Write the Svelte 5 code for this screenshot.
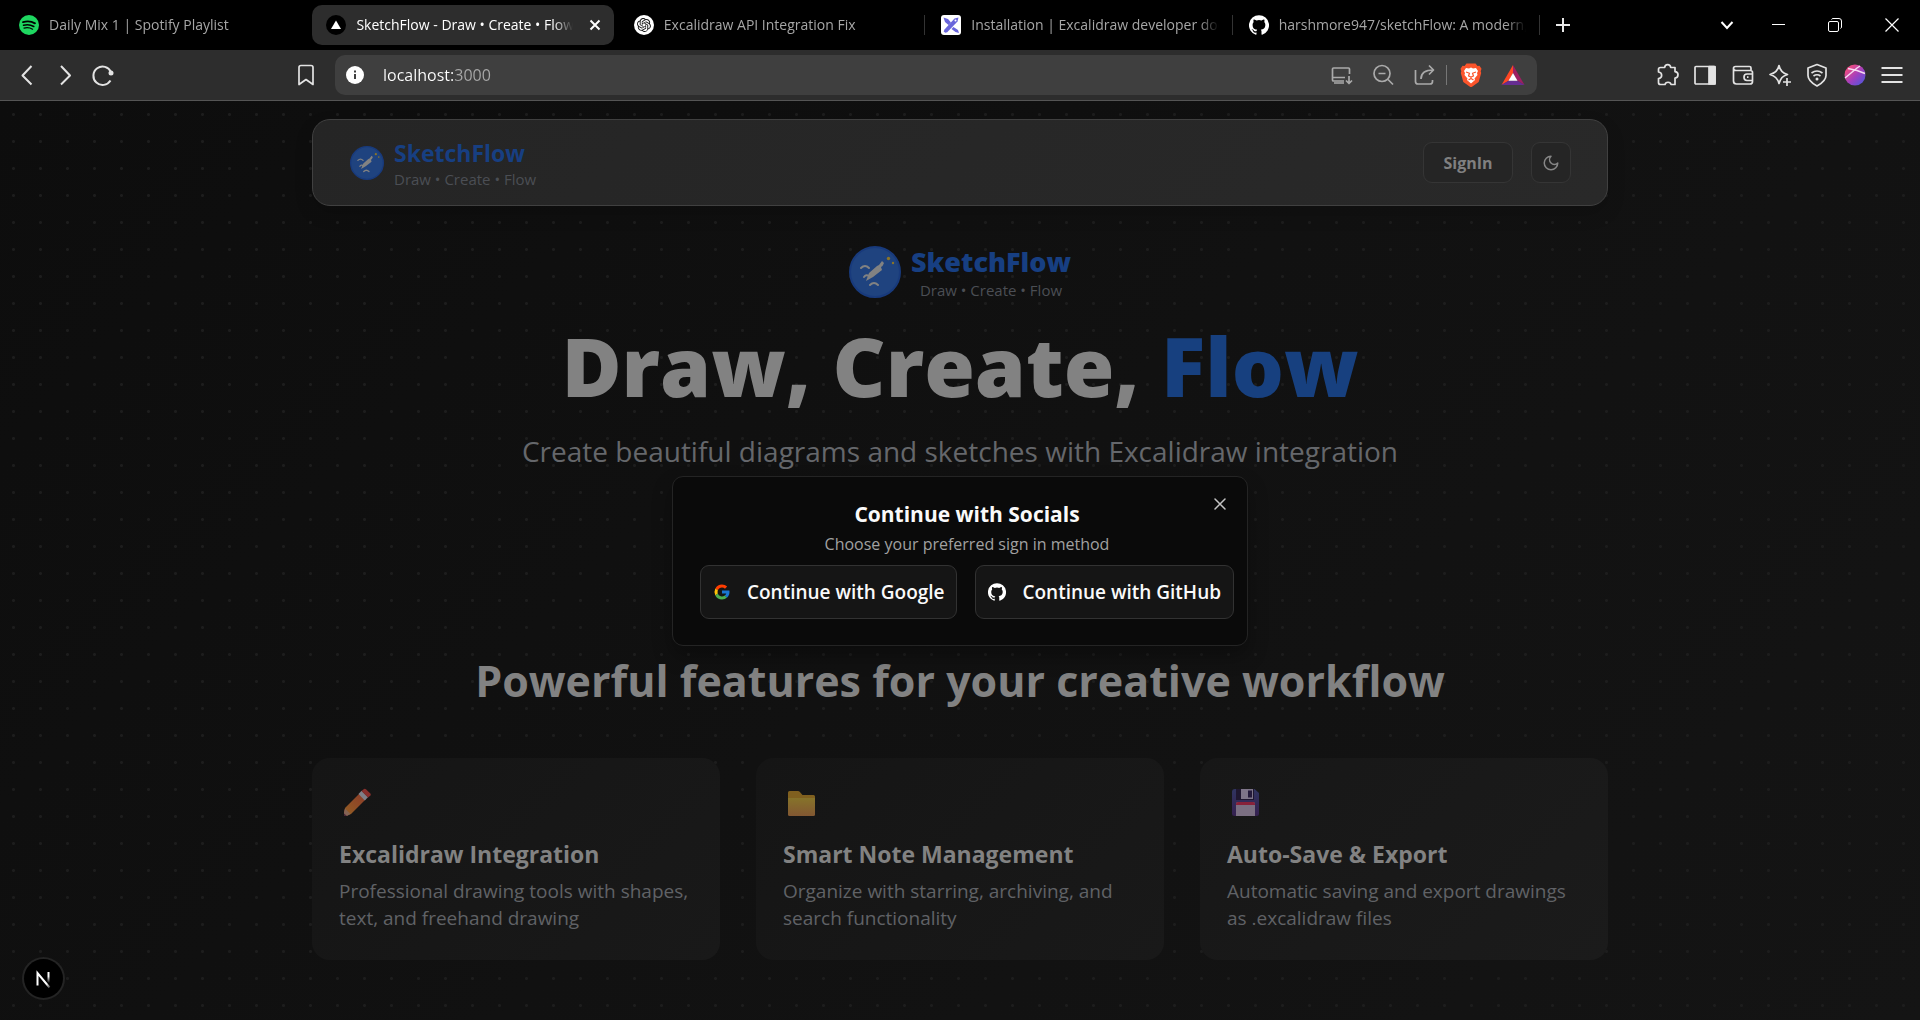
<script>
  let address = $state('localhost:3000');

  const githubPath =
    'M12 .3a12 12 0 0 0-3.8 23.4c.6.1.8-.3.8-.6v-2c-3.3.7-4-1.6-4-1.6-.6-1.4-1.4-1.8-1.4-1.8-1-.7.1-.7.1-.7 1.2 0 1.9 1.2 1.9 1.2 1 1.8 2.8 1.3 3.5 1 0-.8.4-1.3.7-1.6-2.7-.3-5.5-1.3-5.5-6 0-1.2.5-2.3 1.3-3.1-.2-.4-.6-1.6 0-3.2 0 0 1-.3 3.4 1.2a11.5 11.5 0 0 1 6 0c2.3-1.5 3.3-1.2 3.3-1.2.6 1.6.2 2.8 0 3.2.9.8 1.3 1.9 1.3 3.2 0 4.6-2.8 5.6-5.5 5.9.5.4.9 1 .9 2.2v3.3c0 .3.1.7.8.6A12 12 0 0 0 12 .3';
  const knotPath =
    'M22.2819 9.8211a5.9847 5.9847 0 0 0-.5157-4.9108 6.0462 6.0462 0 0 0-6.5098-2.9A6.0651 6.0651 0 0 0 4.9807 4.1818a5.9847 5.9847 0 0 0-3.9977 2.9 6.0462 6.0462 0 0 0 .7427 7.0966 5.98 5.98 0 0 0 .511 4.9107 6.051 6.051 0 0 0 6.5146 2.9001A5.9847 5.9847 0 0 0 13.2599 24a6.0557 6.0557 0 0 0 5.7718-4.2058 5.9894 5.9894 0 0 0 3.9977-2.9001 6.0557 6.0557 0 0 0-.7475-7.0729zm-9.022 12.6081a4.4755 4.4755 0 0 1-2.8764-1.0408l.1419-.0804 4.7783-2.7582a.7948.7948 0 0 0 .3927-.6813v-6.7369l2.02 1.1686a.071.071 0 0 1 .038.052v5.5826a4.504 4.504 0 0 1-4.4945 4.4944zm-9.6607-4.1254a4.4708 4.4708 0 0 1-.5346-3.0137l.142.0852 4.783 2.7582a.7712.7712 0 0 0 .7806 0l5.8428-3.3685v2.3324a.0804.0804 0 0 1-.0332.0615L9.74 19.9502a4.4992 4.4992 0 0 1-6.1408-1.6464zM2.3408 7.8956a4.485 4.485 0 0 1 2.3655-1.9728V11.6a.7664.7664 0 0 0 .3879.6765l5.8144 3.3543-2.0201 1.1685a.0757.0757 0 0 1-.071 0l-4.8303-2.7865A4.504 4.504 0 0 1 2.3408 7.872zm16.5963 3.8558L13.1038 8.364 15.1192 7.2a.0757.0757 0 0 1 .071 0l4.8303 2.7913a4.4944 4.4944 0 0 1-.6765 8.1042v-5.6772a.79.79 0 0 0-.407-.667zm2.0107-3.0231l-.142-.0852-4.7735-2.7818a.7759.7759 0 0 0-.7854 0L9.409 9.2297V6.8974a.0662.0662 0 0 1 .0284-.0615l4.8303-2.7866a4.4992 4.4992 0 0 1 6.6802 4.66zM8.3065 12.863l-2.02-1.1638a.0804.0804 0 0 1-.038-.0567V6.0742a4.4992 4.4992 0 0 1 7.3757-3.4537l-.142.0805L8.704 5.459a.7948.7948 0 0 0-.3927.6813zm1.0976-2.3654l2.602-1.4998 2.6069 1.4998v2.9994l-2.5974 1.4997-2.6067-1.4997Z';

  const tabs = [
    { icon: 'spotify', title: 'Daily Mix 1 | Spotify Playlist' },
    { icon: 'triangle', title: 'SketchFlow - Draw • Create • Flow', active: true },
    { icon: 'knot', title: 'Excalidraw API Integration Fix', divider: true },
    { icon: 'excalidraw', title: 'Installation | Excalidraw developer docs', divider: true },
    { icon: 'github', title: 'harshmore947/sketchFlow: A modern, collaborative', divider: true }
  ];

  const features = [
    {
      icon: 'pencil',
      title: 'Excalidraw Integration',
      text: 'Professional drawing tools with shapes, text, and freehand drawing'
    },
    {
      icon: 'folder',
      title: 'Smart Note Management',
      text: 'Organize with starring, archiving, and search functionality'
    },
    {
      icon: 'floppy',
      title: 'Auto-Save & Export',
      text: 'Automatic saving and export drawings as .excalidraw files'
    }
  ];
</script>

{#snippet favicon(name)}
  {#if name === 'spotify'}
    <svg class="fav" viewBox="0 0 20 20" aria-hidden="true">
      <circle cx="10" cy="10" r="10" fill="#1ed760" />
      <g fill="none" stroke="#000" stroke-linecap="round">
        <path d="M4 7.2c4-1.2 8.600-.8 12 1.200" stroke-width="1.800" />
        <path d="M4.500 10.300c3.500-1 7.200-.6 10.300 1.200" stroke-width="1.500" />
        <path d="M5 13.100c3-.8 5.900-.5 8.600 1.100" stroke-width="1.200" />
      </g>
    </svg>
  {:else if name === 'triangle'}
    <svg class="fav" viewBox="0 0 20 20" aria-hidden="true">
      <circle cx="10" cy="10" r="10" fill="#000" />
      <path d="M10 5.500 15 14H5z" fill="#fff" />
    </svg>
  {:else if name === 'knot'}
    <svg class="fav" viewBox="0 0 20 20" aria-hidden="true">
      <circle cx="10" cy="10" r="10" fill="#fff" />
      <path d={knotPath} fill="#111" transform="translate(3 3) scale(.58)" />
    </svg>
  {:else if name === 'excalidraw'}
    <svg class="fav" viewBox="0 0 20 20" aria-hidden="true">
      <rect width="20" height="20" rx="3" fill="#fff" />
      <path d="M2.500 2.500 7 4l3 3.500L7.500 10 4 7zM12.500 12l4.500 3 1 3-3.500-1-4-3z" fill="#6965db" />
      <path d="m17.500 2.500-4 1L3.500 14.500l-.8 2 1.500 1.200 2-.5L16.500 6.500z" fill="#6965db" />
      <circle cx="14.500" cy="5.500" r="1" fill="#fff" />
    </svg>
  {:else}
    <svg class="fav" viewBox="0 0 24 24" aria-hidden="true"><path d={githubPath} fill="#fff" /></svg>
  {/if}
{/snippet}

{#snippet brandMark()}
  <svg class="mark" viewBox="0 0 52 52" aria-hidden="true">
    <circle cx="26" cy="26" r="25" fill="#1f437f" stroke="#183a7c" stroke-width="2" />
    <g fill="none" stroke="#828282" stroke-width="2" stroke-linecap="round">
      <path d="M12 22q4-4 8 0M15 31q2-3 5-1M21 39q4-4 8 0" />
    </g>
    <path d="m33 15 2 2-1.500 3-1.500 1 1 3-9 7-7 4 3-8 8-7 2-1z" fill="#828282" />
    <circle cx="39.500" cy="12.500" r="1.700" fill="#8b7528" />
    <circle cx="44" cy="17" r="1.200" fill="#8b7528" />
  </svg>
{/snippet}

<div class="window">
  <header class="tabstrip">
    <nav class="tabs" aria-label="Tabs">
      {#each tabs as tab}
        <div class="tab" class:active={tab.active} class:divider={tab.divider}>
          {@render favicon(tab.icon)}
          <a class="tab-title" href="#top">{tab.title}</a>
          {#if tab.active}
            <button class="tab-close" aria-label="Close tab">
              <svg width="12" height="12" viewBox="0 0 12 12"><path d="M1.500 1.500 10.500 10.500M10.500 1.500 1.500 10.500" stroke="#fff" stroke-width="2" /></svg>
            </button>
          {/if}
        </div>
      {/each}
    </nav>
    <button class="plain new-tab" aria-label="New tab">
      <svg width="14" height="14" viewBox="0 0 14 14"><path d="M7 0v14M0 7h14" stroke="#e8e8e8" stroke-width="2" /></svg>
    </button>
    <div class="window-controls">
      <button class="plain tab-search" aria-label="Search tabs">
        <svg width="14" height="10" viewBox="0 0 14 10"><path d="m1.500 2 5.500 6 5.500-6" fill="none" stroke="#fff" stroke-width="2" /></svg>
      </button>
      <button class="plain" aria-label="Minimize">
        <svg width="13" height="13" viewBox="0 0 13 13"><path d="M0 5.500h13" stroke="#fff" /></svg>
      </button>
      <button class="plain" aria-label="Restore">
        <svg width="14" height="14" viewBox="0 0 14 14"><g fill="none" stroke="#fff"><rect x=".5" y="3.500" width="10" height="10" rx="1.500" /><path d="M3.500 1.500q.5-1 1.500-1h6q2.500 0 2.500 2.500v6q0 1-1 1.500" /></g></svg>
      </button>
      <button class="plain" aria-label="Close window">
        <svg width="14" height="14" viewBox="0 0 14 14"><path d="m.5.5 13 13M13.500.5.5 13.500" stroke="#fff" stroke-width="1.200" /></svg>
      </button>
    </div>
  </header>

  <div class="toolbar">
    <div class="nav-group">
      <button class="tool" aria-label="Back">
        <svg viewBox="0 0 24 24"><path d="m16.500 3-9 9.500 9 9" stroke-width="2" /></svg>
      </button>
      <button class="tool" aria-label="Forward">
        <svg viewBox="0 0 24 24"><path d="m8 3 9 9.500-9 9" stroke-width="2" /></svg>
      </button>
      <button class="tool" aria-label="Reload">
        <svg viewBox="0 0 24 24"><path d="M19.500 17.500A9.200 9.200 0 1 1 20 9" stroke-width="2" /><circle cx="20" cy="10" r="2.500" fill="#e3e3e3" stroke="none" /></svg>
      </button>
      <button class="tool bookmark" aria-label="Bookmark this page">
        <svg viewBox="0 0 24 24"><path d="M5 21.500V4.500q0-2 2-2h10q2 0 2 2v17l-7-5z" /></svg>
      </button>
    </div>

    <div class="address">
      <svg class="info" viewBox="0 0 18 18" aria-hidden="true"><circle cx="9" cy="9" r="9" fill="#fff" /><path d="M9 8v5M9 4.500v2" stroke="#3f3f3f" stroke-width="2" /></svg>
      <input type="text" aria-label="Address" bind:value={address} />
      <div class="page-actions">
        <button class="tool dim" aria-label="Install app">
          <svg viewBox="0 0 24 24"><path d="M20.500 11V6q0-1-1-1h-15q-1 0-1 1v11q0 1 1 1H15M3 14.500h13M5 20h10M20 13v7M17 17.500l3 3 3-3" /></svg>
        </button>
        <button class="tool dim" aria-label="Zoom out">
          <svg viewBox="0 0 24 24"><circle cx="11" cy="10.500" r="8" /><path d="M7.500 10.500h7M17 16.500l5 5" /></svg>
        </button>
        <button class="tool dim" aria-label="Share">
          <svg viewBox="0 0 24 24"><path d="M2.500 7v11.500q0 2.500 2.500 2.500h12q2.500 0 2.500-2.500V17M8 16c0-6 4-9 12.500-9M16 2.500 20.500 7 16 11.500" /></svg>
        </button>
      </div>
      <span class="rule"></span>
      <div class="page-actions">
        <button class="tool" aria-label="Shields">
          <svg viewBox="0 0 24 24"><path d="m7.500.5h9l2 2.500 2-.2 2 3-.8 2.500.5 1.700-2.500 9-7.700 5.500L4.300 19 1.800 10l.5-1.700-.8-2.500 2-3 2 .2z" fill="#fb542b" stroke="none" /><path d="m7 5 3 .5L12 4.500l2 1L17 5l2 3-1 2 .5 2-3 3.500.5 1.500-4 3.500L8 17l.5-1.500-3-3.500.5-2-1-2z" fill="#fff" stroke="none" /><path d="m7 9 3.500 1.200L9.500 13l2.500 1 2.500-1-1-2.800L17 9M12 14v1.500M9.500 17l2.500-1.500 2.500 1.500" stroke="#fb542b" stroke-width="1.200" /></svg>
        </button>
        <button class="tool" aria-label="Rewards">
          <svg viewBox="0 0 24 24"><path d="M12 2 .5 22 8 17.500l4-7.500z" fill="#ff4724" stroke="none" /><path d="M12 2 23.500 22 16 17.500 12 10z" fill="#9e1f63" stroke="none" /><path d="M.5 22h23L16 17.500H8z" fill="#662d91" stroke="none" /><path d="m12 10 4.500 7.800h-9z" fill="#fff" stroke="none" /></svg>
        </button>
      </div>
    </div>

    <div class="extensions">
      <button class="tool" aria-label="Extensions">
        <svg viewBox="0 0 24 24"><path d="M4.500 4.500h4.200c.3-3.800 5.600-3.800 6 0H19v4.200c4 .3 4 6 0 6.400v6.400h-4c-.4-3-5.500-3-6 0H4.500q-2 0-2-2v-4c4.200-.4 4.200-6 0-6.500V6.500q0-2 2-2z" /></svg>
      </button>
      <button class="tool" aria-label="Side panel">
        <svg viewBox="0 0 24 24"><rect x="2" y="3.500" width="20" height="17.500" rx="1" /><path d="M16 3.500h6V21h-6z" fill="#e3e3e3" /></svg>
      </button>
      <button class="tool" aria-label="Wallet">
        <svg viewBox="0 0 24 24"><path d="M20 7.500V5q0-1.500-1.500-1.500H4.500q-2 0-2 2V18q0 3 3 3H19q2.500 0 2.500-2.500v-9q0-2-2-2H5q-2.500 0-2.500-2M21.500 11H16q-3 0-3 3.200t3 3.300h5.500M16 14.200h1.500" /></svg>
      </button>
      <button class="tool" aria-label="Assistant">
        <svg viewBox="0 0 24 24"><path d="M11 2.500c1 5 3 7.500 8.500 9-2.500.8-4 1.500-5.500 3-1.500 1.800-2.200 3.500-3 6-1.200-5-3.500-7.500-9-9 5.500-1.500 8-4 9-9zM19 15v8M15 19h8" /></svg>
      </button>
      <button class="tool" aria-label="VPN">
        <svg viewBox="0 0 24 24"><path d="m12 1.500 9 3.500v7.500c0 4.500-3.500 7.500-9 10.500-5.500-3-9-6-9-10.500V5zM6.500 10q5.500-4 11 0M8.500 13q3.500-2.500 7 0" /><circle cx="12" cy="16" r="1.500" fill="#e3e3e3" stroke="none" /></svg>
      </button>
      <button class="tool" aria-label="Profile">
        <svg viewBox="0 0 24 24">
          <defs><linearGradient id="avatar" x1="0" y1="0" x2="1" y2="1"><stop offset=".2" stop-color="#e84b86" /><stop offset=".55" stop-color="#a13fc0" /><stop offset="1" stop-color="#3f5be0" /></linearGradient></defs>
          <circle cx="12" cy="12" r="10.500" fill="url(#avatar)" stroke="none" /><path d="M2 15 14 5l3-2M5 5.500l9 2 8 3" stroke="#f6d9f3" stroke-width="1.500" />
        </svg>
      </button>
      <button class="tool" aria-label="Menu">
        <svg viewBox="0 0 24 24"><path d="M1.500 5h21M1.500 12h21M1.500 19h21" stroke-width="2" /></svg>
      </button>
    </div>
  </div>

  <div class="page" id="top">
    <div class="container">
      <header class="site-header">
        <div class="brand small">
          {@render brandMark()}
          <div>
            <div class="brand-name">SketchFlow</div>
            <div class="tagline">Draw • Create • Flow</div>
          </div>
        </div>
        <div class="header-actions">
          <button class="sign-in">SignIn</button>
          <button class="theme" aria-label="Toggle theme">
            <svg width="18" height="18" viewBox="0 0 24 24" fill="none" stroke="#868686" stroke-width="2" stroke-linecap="round" stroke-linejoin="round"><path d="M12 3a6 6 0 0 0 9 9 9 9 0 1 1-9-9Z" /></svg>
          </button>
        </div>
      </header>

      <main>
        <section class="hero">
          <div class="brand large">
            {@render brandMark()}
            <div>
              <div class="brand-name">SketchFlow</div>
              <div class="tagline">Draw • Create • Flow</div>
            </div>
          </div>
          <h1>Draw, Create, <span>Flow</span></h1>
          <p>Create beautiful diagrams and sketches with Excalidraw integration</p>
        </section>

        <section class="features">
          <h2>Powerful features for your creative workflow</h2>
          <div class="cards">
            {#each features as feature}
              <article class="card">
                <svg class="emoji" viewBox="0 0 36 36" aria-hidden="true">
                  {#if feature.icon === 'pencil'}
                    <defs><linearGradient id="wood" x1="0" y1="1" x2="1" y2="0"><stop offset="0" stop-color="#935f23" /><stop offset="1" stop-color="#8b3a29" /></linearGradient></defs>
                    <path d="m5 24 3.500 6.500H5z" fill="#4a2637" />
                    <path d="m6 23 15-15 6 6-15 15-4.500 1.500L5 29z" fill="url(#wood)" />
                    <path d="M6 23.500 11.500 29l-3.500 2H5v-3.500z" fill="#846353" />
                    <path d="M5 28.500 8 31H5z" fill="#4a2637" />
                    <path d="m19.500 9 3-3.200 6.500 6.400-3.200 3.200z" fill="#7f8088" />
                    <path d="m22.500 6 2.500-2q1-.6 2 .3l4.300 4.200q1 1 .1 2L29 12.500z" fill="#88302d" />
                  {:else if feature.icon === 'folder'}
                    <defs><linearGradient id="manila" x1="0" y1="0" x2="0" y2="1"><stop offset="0" stop-color="#86732a" /><stop offset="1" stop-color="#825732" /></linearGradient></defs>
                    <path d="M5 28V7.500Q5 6 6.500 6h8.500q1 0 1.700.8L19.500 10H30.500q1.500 0 1.500 1.500V28z" fill="#80601f" />
                    <path d="M5 13h27v16.500q0 1.500-1.500 1.500h-24Q5 31 5 29.500z" fill="url(#manila)" />
                  {:else}
                    <defs><linearGradient id="disk" x1="0" y1="0" x2="0" y2="1"><stop offset="0" stop-color="#303460" /><stop offset="1" stop-color="#35204f" /></linearGradient></defs>
                    <path d="M8 4h19.500L32 8v20.500q0 2.500-2.500 2.500H7.500Q5 31 5 28.500V7q0-3 3-3z" fill="url(#disk)" />
                    <path d="M9 4h18v11H9z" fill="#1f1730" />
                    <path d="M14 4h12v10H14z" fill="#7e7589" /><path d="M21 5.500h4v7h-4z" fill="#241a3b" />
                    <path d="M9 19q0-2 2-2h15q2 0 2 2v12H9z" fill="#7b6f82" />
                    <path d="M9 20v-1q0-2 2-2h15q2 0 2 2v1z" fill="#88213a" />
                  {/if}
                </svg>
                <h3>{feature.title}</h3>
                <p>{feature.text}</p>
              </article>
            {/each}
          </div>
        </section>
      </main>
    </div>

    <button class="dev-badge" aria-label="Open developer tools">
      <svg width="40" height="40" viewBox="0 0 40 40" fill="none">
        <defs>
          <linearGradient id="stem" x1="0" y1="13" x2="0" y2="24" gradientUnits="userSpaceOnUse"><stop offset=".4" stop-color="#fff" /><stop offset="1" stop-color="#fff" stop-opacity="0" /></linearGradient>
          <linearGradient id="slash" x1="20" y1="20" x2="27" y2="28" gradientUnits="userSpaceOnUse"><stop offset=".5" stop-color="#fff" /><stop offset="1" stop-color="#fff" stop-opacity=".2" /></linearGradient>
        </defs>
        <path d="M13.500 26.500V14l12 14.500" stroke="url(#slash)" stroke-width="2" />
        <path d="M24.500 13v11" stroke="url(#stem)" stroke-width="2" />
      </svg>
    </button>

    <div class="dialog" role="dialog" aria-modal="true" aria-labelledby="dialog-title">
      <h2 id="dialog-title">Continue with Socials</h2>
      <p>Choose your preferred sign in method</p>
      <div class="providers">
        <button>
          <svg width="18" height="18" viewBox="0 0 48 48" aria-hidden="true">
            <path fill="#ff3d00" d="M6.300 14.700l6.600 4.800C14.700 15.100 19 12 24 12c3.100 0 5.800 1.200 8 3l5.700-5.700C34 6.100 29.300 4 24 4 16.300 4 9.700 8.300 6.300 14.700z" />
            <path fill="#ffc107" d="M6.300 14.700A20 20 0 0 0 6.300 33.300l6.600-5a12 12 0 0 1 0-8.800z" />
            <path fill="#4caf50" d="M24 44c5.200 0 9.900-2 13.400-5.200l-6.200-5.200A12 12 0 0 1 12.700 28l-6.500 5C9.500 39.600 16.200 44 24 44z" />
            <path fill="#1976d2" d="M43.600 20H24v8h11.300a12 12 0 0 1-4.100 5.600l6.200 5.200C37 39.200 44 34 44 24c0-1.300-.1-2.600-.4-4z" />
          </svg>
          Continue with Google
        </button>
        <button>
          <svg width="18" height="18" viewBox="0 0 24 24" aria-hidden="true"><path d={githubPath} fill="#fff" /></svg>
          Continue with GitHub
        </button>
      </div>
      <button class="dialog-close" aria-label="Close">
        <svg width="12" height="12" viewBox="0 0 12 12"><path d="M1 1l10 10M11 1 1 11" stroke="#c4c4c4" stroke-width="1.500" stroke-linecap="round" /></svg>
      </button>
    </div>
  </div>
</div>

<style>
  :global(body) {
    margin: 0;
    background: #000;
  }
  .window {
    display: flex;
    flex-direction: column;
    min-height: 100vh;
    font-family: 'Open Sans', 'Noto Sans', sans-serif;
    color: #808080;
  }
  button {
    font: inherit;
    color: inherit;
    background: none;
    border: 0;
    padding: 0;
    display: flex;
    align-items: center;
    justify-content: center;
  }
  svg {
    display: block;
    flex: none;
  }
  h1, h2, h3, p {
    margin: 0;
  }

  /* Tab strip */
  .tabstrip {
    display: flex;
    align-items: center;
    height: 50px;
    padding: 0 8px 0 5px;
    background: #000;
  }
  .tabs {
    display: flex;
    gap: 6px;
    flex: 0 1 1531px;
    min-width: 0;
  }
  .tab {
    position: relative;
    display: flex;
    align-items: center;
    flex: 1 1 0;
    min-width: 0;
    height: 40px;
    gap: 10px;
    padding: 0 10px 0 14px;
    box-sizing: border-box;
    border-radius: 10px;
  }
  .tab.active {
    background: #2d2d2d;
  }
  .tab.divider::after {
    content: '';
    position: absolute;
    right: -4px;
    top: 10px;
    width: 1px;
    height: 20px;
    background: #333;
  }
  .fav {
    width: 20px;
    height: 20px;
  }
  .tab-title {
    flex: 1;
    min-width: 0;
    overflow: hidden;
    white-space: nowrap;
    font-size: 14px;
    line-height: 20px;
    color: #a6a6a6;
    text-decoration: none;
    mask-image: linear-gradient(to right, #000 calc(100% - 20px), transparent);
  }
  .active .tab-title {
    color: #fff;
  }
  .tab-close {
    width: 24px;
    height: 24px;
    margin-right: -3px;
  }
  .plain {
    width: 40px;
    height: 40px;
  }
  .new-tab {
    margin-left: 7px;
  }
  .tab-search {
    margin-right: -6px;
  }
  .window-controls {
    display: flex;
    gap: 17px;
    margin-left: auto;
  }

  /* Toolbar */
  .toolbar {
    display: flex;
    align-items: center;
    height: 50px;
    padding: 0 16px 0 15px;
    background: #2d2d2d;
    border-bottom: 1px solid #555;
  }
  .nav-group {
    display: flex;
    gap: 14px;
    width: 303px;
    margin-right: 17px;
  }
  .bookmark {
    margin-left: auto;
  }
  .tool {
    width: 24px;
    height: 24px;
    flex: none;
  }
  .tool svg {
    width: 24px;
    height: 24px;
    fill: none;
    stroke: #e3e3e3;
    stroke-width: 1.700;
    stroke-linejoin: round;
  }
  .tool.dim svg {
    stroke: #aaa;
  }
  .address {
    display: flex;
    align-items: center;
    flex: 1;
    min-width: 0;
    height: 40px;
    padding: 0 12px 0 11px;
    box-sizing: border-box;
    border-radius: 10px;
    background: #3f3f3f;
  }
  .info {
    width: 18px;
    height: 18px;
  }
  .address input {
    flex: 1;
    min-width: 0;
    margin-left: 19px;
    padding: 0;
    border: 0;
    outline: 0;
    font: inherit;
    font-size: 16px;
    line-height: 24px;
    color: transparent;
    background: linear-gradient(to right, #fff 71px, #a9a9a9 71px);
    background-clip: text;
    -webkit-background-clip: text;
    caret-color: #fff;
  }
  .page-actions {
    display: flex;
    gap: 18px;
  }
  .rule {
    width: 1px;
    height: 20px;
    margin: 0 12px 0 9px;
    background: #777;
  }
  .extensions {
    display: flex;
    justify-content: space-between;
    width: 248px;
    margin-left: 119px;
  }

  /* Page */
  .page {
    position: relative;
    flex: 1;
    background:
      radial-gradient(circle, #1d1d1d 1px, transparent 2px) 0 0 / 27px 27px,
      linear-gradient(135deg, #0d0d0d, #111 50%, #141414);
  }
  .container {
    max-width: 1296px;
    margin: 0 auto;
    padding: 18px 0 60px;
  }
  .site-header {
    display: flex;
    align-items: center;
    justify-content: space-between;
    height: 87px;
    padding: 0 36px 0 37px;
    box-sizing: border-box;
    border: 1px solid #404040;
    border-radius: 18px;
    background: linear-gradient(135deg, #252525, #292929);
    box-shadow: 0 8px 18px rgba(0, 0, 0, 0.15);
  }
  .brand {
    display: flex;
    align-items: center;
    gap: 10px;
  }
  .brand-name {
    color: #173f82;
    font-weight: 700;
  }
  .tagline {
    font-size: 15px;
    line-height: 20px;
    color: #4b4e54;
  }
  .small .mark {
    width: 34px;
    height: 34px;
  }
  .small .brand-name {
    font-size: 23px;
    line-height: 32px;
  }
  .small .tagline {
    font-weight: 500;
  }
  .large .mark {
    width: 52px;
    height: 52px;
  }
  .large .brand-name {
    font-size: 27px;
    line-height: 36px;
    font-weight: 800;
  }
  .large .tagline {
    text-align: center;
    font-weight: 500;
  }
  .header-actions {
    display: flex;
    gap: 18px;
  }
  .sign-in,
  .theme {
    height: 41px;
    box-sizing: border-box;
    border: 1px solid #353535;
    border-radius: 9px;
    background: #252525;
  }
  .sign-in {
    width: 90px;
    font-size: 16px;
    font-weight: 700;
  }
  .theme {
    width: 40px;
  }
  .hero {
    display: flex;
    flex-direction: column;
    align-items: center;
    padding-top: 38px;
    text-align: center;
  }
  h1 {
    margin: 24px 0 27px;
    font-size: 82px;
    line-height: 82px;
    font-weight: 800;
    color: #828282;
  }
  h1 span {
    color: #17407f;
  }
  .hero p {
    font-size: 28px;
    line-height: 36px;
    color: #65676b;
  }
  .features {
    padding-top: 185px;
  }
  .features h2 {
    font-size: 43px;
    line-height: 54px;
    font-weight: 700;
    text-align: center;
    color: #828282;
  }
  .cards {
    display: grid;
    grid-template-columns: repeat(3, minmax(0, 1fr));
    gap: 36px;
    margin-top: 50px;
  }
  .card {
    padding: 27px 27px 28px;
    border-radius: 18px;
    background: linear-gradient(135deg, #151515, #191919);
  }
  .card:nth-child(3) {
    background: linear-gradient(135deg, #171717, #1b1b1b);
  }
  .emoji {
    width: 36px;
    height: 36px;
  }
  .card h3 {
    margin: 15px 0 6px;
    font-size: 23px;
    line-height: 36px;
    font-weight: 700;
    color: #828282;
  }
  .card p {
    font-size: 19px;
    line-height: 27px;
    color: #606266;
  }
  .dev-badge {
    position: absolute;
    left: 24px;
    bottom: 22px;
    width: 39px;
    height: 39px;
    border-radius: 50%;
    background: #000;
    box-shadow: 0 0 0 2px #242424;
  }

  /* Sign-in dialog */
  .dialog {
    position: absolute;
    left: 50%;
    top: 50%;
    transform: translate(-50%, -50%);
    width: 576px;
    padding: 23px 13px 26px 27px;
    box-sizing: border-box;
    border: 1px solid #242424;
    border-radius: 11px;
    background: #0a0a0a;
    box-shadow: 0 10px 20px rgba(0, 0, 0, 0.3);
    text-align: center;
  }
  .dialog h2 {
    font-size: 21px;
    line-height: 28px;
    font-weight: 700;
    color: #fafafa;
  }
  .dialog p {
    margin: 5px 0 10px;
    font-size: 16px;
    line-height: 22px;
    color: #a1a1a1;
  }
  .providers {
    display: flex;
    gap: 18px;
  }
  .providers button {
    flex: 1 1 auto;
    height: 54px;
    gap: 16px;
    border: 1px solid #323232;
    border-radius: 9px;
    background: #151515;
    color: #fafafa;
    font-size: 19px;
    font-weight: 600;
    white-space: nowrap;
    box-sizing: border-box;
  }
  .dialog-close {
    position: absolute;
    right: 16px;
    top: 16px;
    width: 22px;
    height: 22px;
  }
</style>
